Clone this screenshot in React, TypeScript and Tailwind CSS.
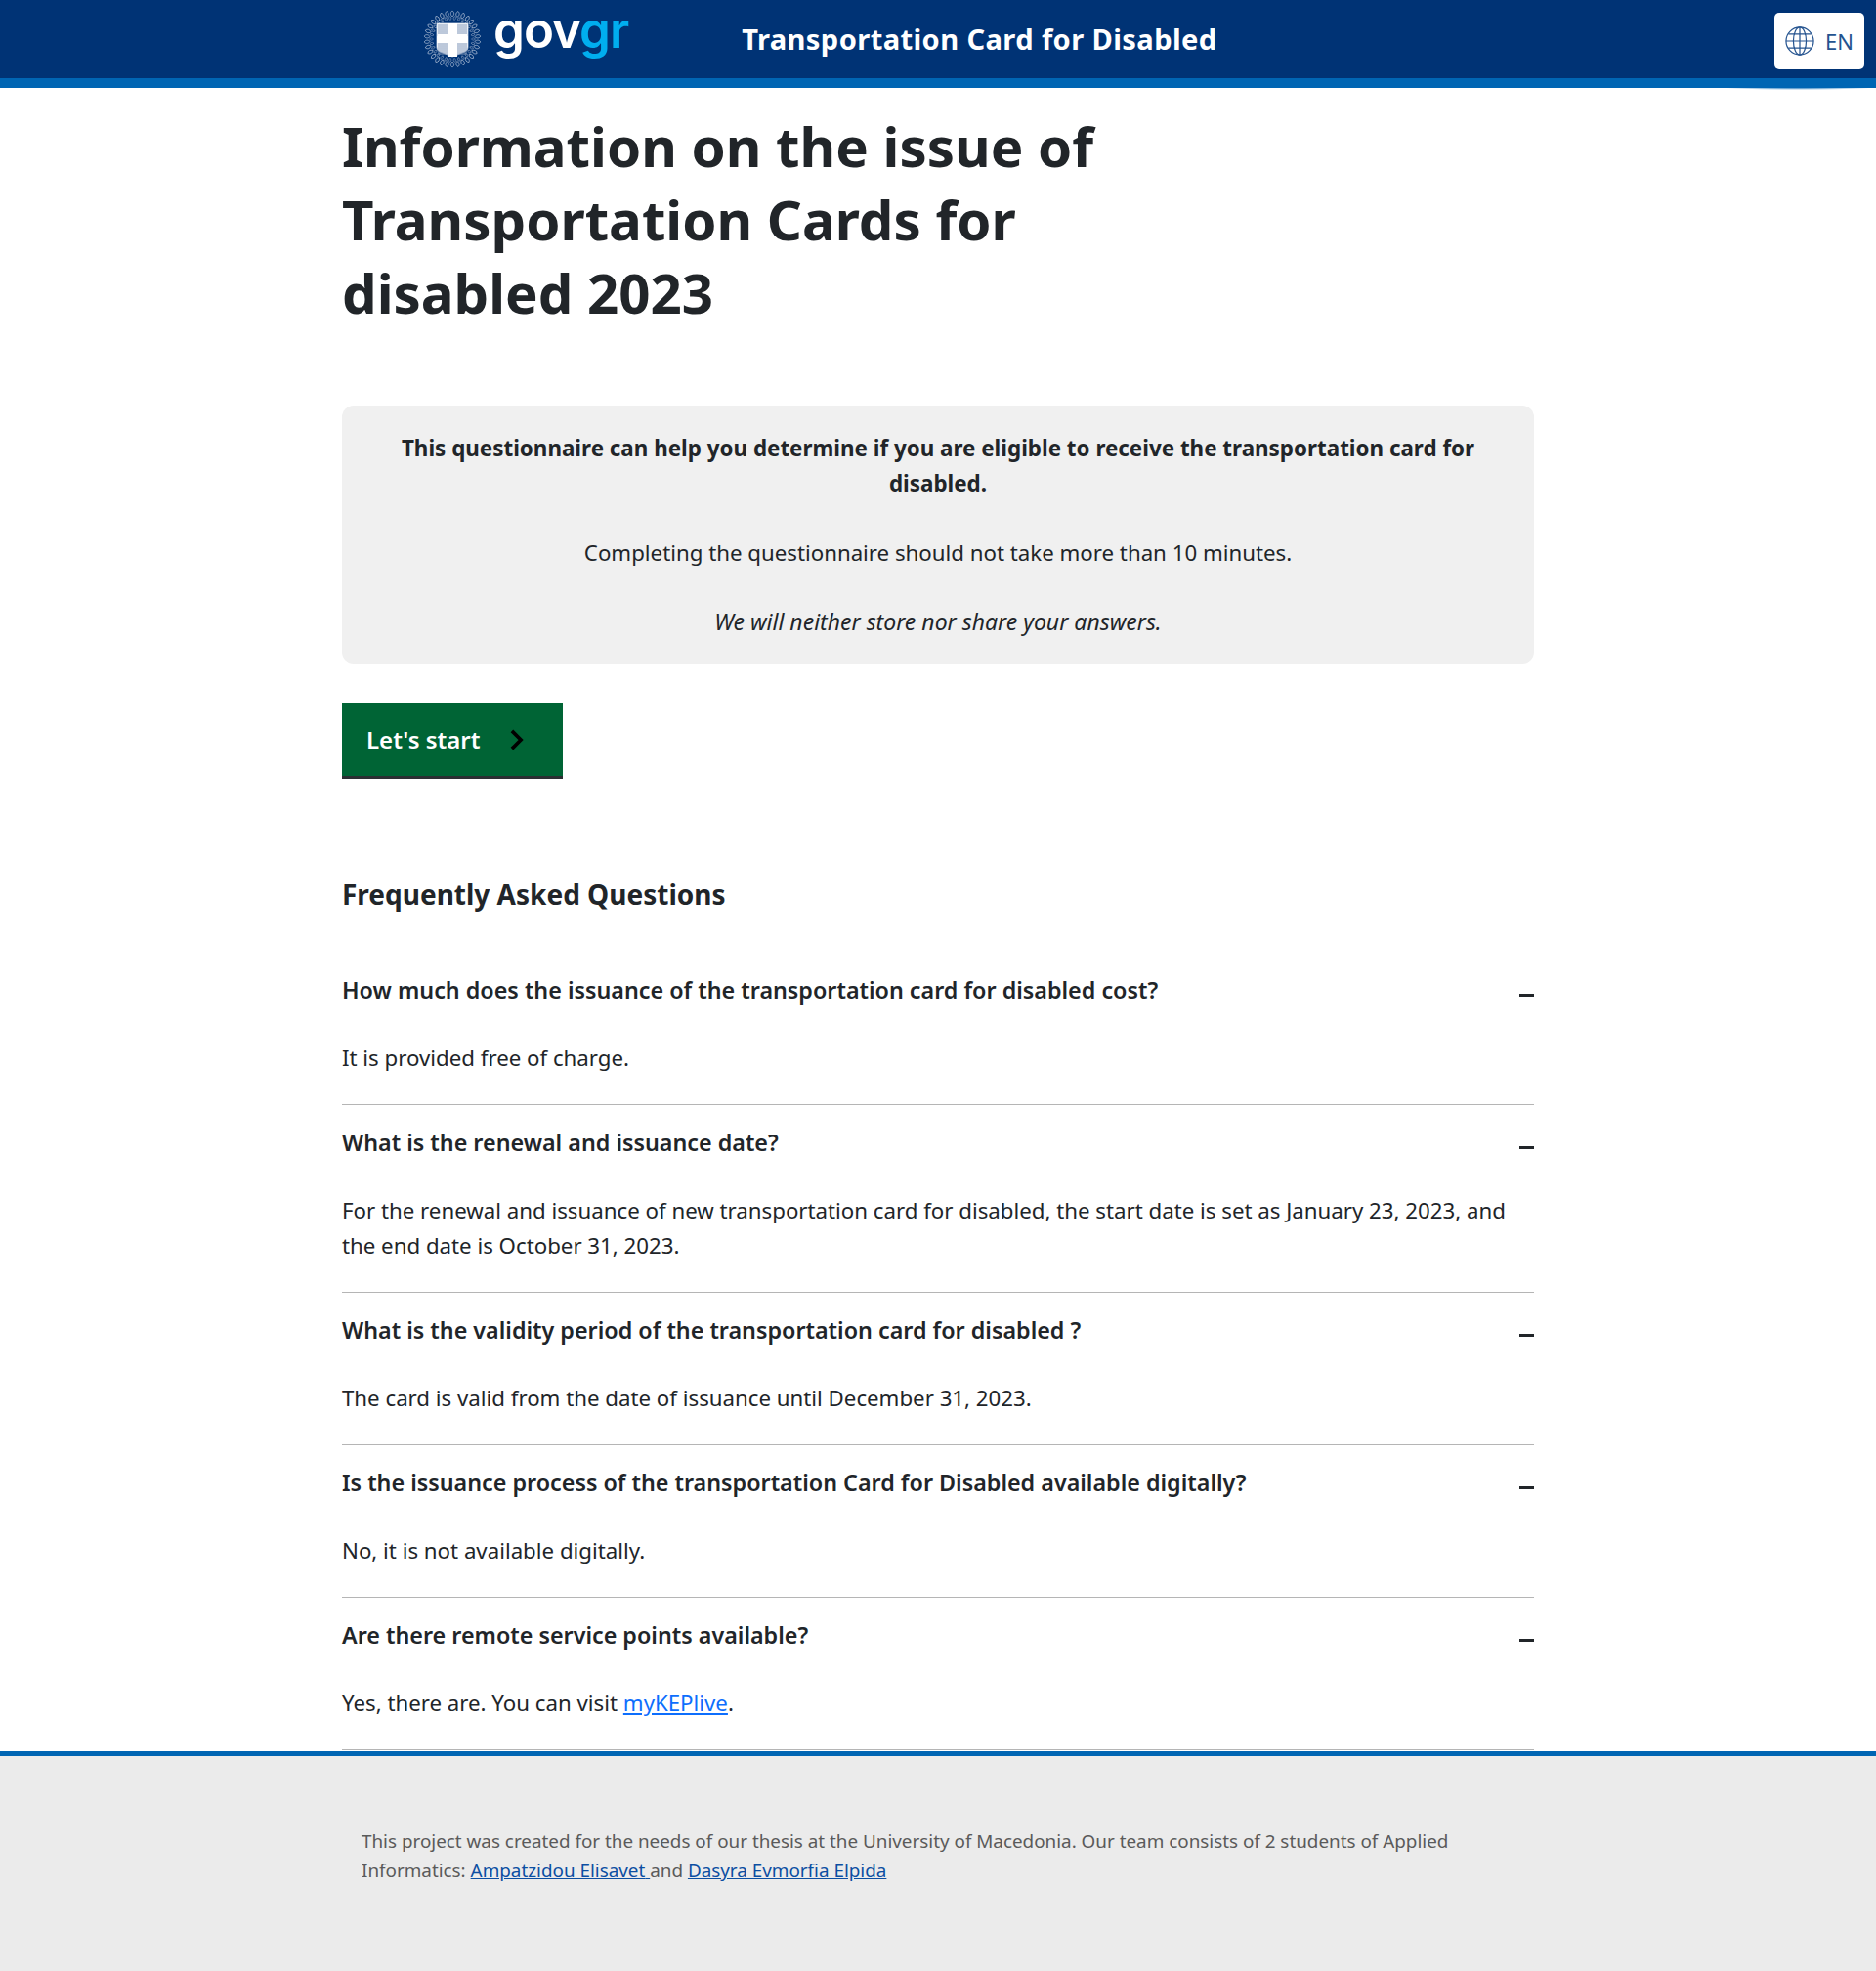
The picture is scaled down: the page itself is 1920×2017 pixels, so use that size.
import { ReactNode } from "react";

const font = { fontFamily: '"Noto Sans", "Open Sans", sans-serif' };

const faqs: { q: string; a: ReactNode }[] = [
  { q: "How much does the issuance of the transportation card for disabled cost?", a: "It is provided free of charge." },
  {
    q: "What is the renewal and issuance date?",
    a: "For the renewal and issuance of new transportation card for disabled, the start date is set as January 23, 2023, and the end date is October 31, 2023.",
  },
  { q: "What is the validity period of the transportation card for disabled ?", a: "The card is valid from the date of issuance until December 31, 2023." },
  { q: "Is the issuance process of the transportation Card for Disabled available digitally?", a: "No, it is not available digitally." },
  {
    q: "Are there remote service points available?",
    a: (
      <>
        Yes, there are. You can visit{" "}
        <a href="#" className="text-[#0d6efd] underline">
          myKEPlive
        </a>
        .
      </>
    ),
  },
];

function Emblem() {
  const leaves = Array.from({ length: 30 }, (_, i) => i * 12);
  const stripes = [16, 18, 20, 22, 24, 35, 37, 39, 41, 43, 45];
  return (
    <svg viewBox="0 0 60 60" className="h-[60px] w-[60px]">
      {leaves.map((deg) => (
        <path key={deg} d="M30 1c2.200 1.500 2.200 4 0 6-2.200-2-2.200-4.500 0-6z" fill="none" stroke="#b4c2d8" strokeWidth="0.7" transform={`rotate(${deg} 30 30)`} />
      ))}
      {leaves.map((deg) => (
        <path key={deg} d="M30 6.500c1.500 1 1.500 2.500 0 4-1.500-1.500-1.500-3 0-4z" fill="none" stroke="#8ea3c3" strokeWidth="0.6" transform={`rotate(${deg + 6} 30 30)`} />
      ))}
      <path d="M14 14h32v24c0 3-2 5-6 6l-10 4-10-4c-4-1-6-3-6-6z" fill="#ffffff" stroke="#c9d4e4" strokeWidth="0.8" />
      {stripes.map((y) => (
        <path key={y} d={`M15 ${y}h30`} stroke="#7a92b6" strokeWidth="1" />
      ))}
      <path d="M25 14h10v34H25zM14 27h32v7H14z" fill="#ffffff" />
    </svg>
  );
}

function Globe() {
  return (
    <svg viewBox="0 0 32 32" className="h-[30px] w-[30px]" fill="none" stroke="#24538f" strokeWidth="1.3">
      <circle cx="16" cy="16" r="15" />
      <ellipse cx="16" cy="16" rx="7" ry="15" />
      <path d="M16 1v30M1 16h30M3.500 8.500h25M3.500 23.500h25" />
    </svg>
  );
}

function Faq({ q, a }: { q: string; a: ReactNode }) {
  return (
    <div className="border-b border-[#b5b5b5] pb-[29px] pt-[20px]">
      <div className="flex items-start justify-between">
        <h3 className="text-[23.3px] font-semibold leading-[36px] text-[#212529]">{q}</h3>
        <span className="mt-[22px] h-[3px] w-[15px] bg-[#212529]" />
      </div>
      <p className="mt-[34px] text-[22.25px] leading-[36px] text-[#212529]">{a}</p>
    </div>
  );
}

export default function App() {
  return (
    <div style={font} className="relative flex min-h-[2017px] flex-col bg-white text-[#212529]">
      <header className="relative flex h-[90px] items-start border-b-[10px] border-[#0065b3] bg-[#003375]">
        <div className="ml-[433px] mt-[10px]">
          <Emblem />
        </div>
        <div style={{ fontFamily: "Inter, sans-serif" }} className="ml-[12px] mt-[-4px] text-[51px] font-semibold leading-[70px] tracking-[-1px]">
          <span className="text-white">gov</span>
          <span className="text-[#00aeef]">gr</span>
        </div>
        <div className="ml-[116px] mt-[18px] text-[29.1px] font-bold leading-[45px] tracking-[0.4px] text-white">Transportation Card for Disabled</div>
        <button className="absolute right-[12px] top-[13px] flex h-[58px] w-[92px] items-center justify-center gap-[11px] rounded-[5px] bg-white text-[22px] text-[#24538f]">
          <Globe />
          EN
        </button>
        <div className="absolute right-0 top-[87px] h-[5px] w-[160px] bg-[radial-gradient(ellipse,#0065b3,transparent_70%)]" />
      </header>

      <main className="mx-auto w-[1220px] flex-1">
        <h1 className="mt-[22px] w-[860px] text-[56.4px] font-bold leading-[75px]">Information on the issue of Transportation Cards for disabled 2023</h1>

        <section className="mt-[78px] rounded-[12px] bg-[#f0f0f0] px-[40px] pb-[25px] pt-[26px] text-center text-[22.4px] leading-[36px]">
          <p className="font-bold">This questionnaire can help you determine if you are eligible to receive the transportation card for disabled.</p>
          <p className="mt-[35px] text-[22.25px]">Completing the questionnaire should not take more than 10 minutes.</p>
          <p className="mt-[34px] text-[23px] italic">We will neither store nor share your answers.</p>
        </section>

        <button className="mt-[40px] flex h-[78px] w-[226px] items-center border-b-[3px] border-[#2b2f33] bg-[#006435] pl-[25px] text-[24px] font-semibold text-white">
          Let's start
          <svg viewBox="0 0 16 24" className="ml-[29px] h-[22px] w-[15px]" fill="none" stroke="#000" strokeWidth="4">
            <path d="M3 2l10 10L3 22" />
          </svg>
        </button>

        <h2 className="mt-[96px] text-[28px] font-bold leading-[45px]">Frequently Asked Questions</h2>

        <div className="mt-[37px]">
          {faqs.map((f) => (
            <Faq key={f.q} q={f.q} a={f.a} />
          ))}
        </div>
      </main>

      <footer className="h-[225px] border-t-[5px] border-[#0065b3] bg-[#ebebeb]">
        <p className="mx-auto mt-[72px] w-[1180px] text-[18.85px] leading-[30px] text-[#5a5a5a]">
          This project was created for the needs of our thesis at the University of Macedonia. Our team consists of 2 students of Applied Informatics:{" "}
          <a href="#" className="text-[#0b4ea2] underline">
            Ampatzidou Elisavet{" "}
          </a>
          and{" "}
          <a href="#" className="text-[#0b4ea2] underline">
            Dasyra Evmorfia Elpida
          </a>
        </p>
      </footer>
    </div>
  );
}
